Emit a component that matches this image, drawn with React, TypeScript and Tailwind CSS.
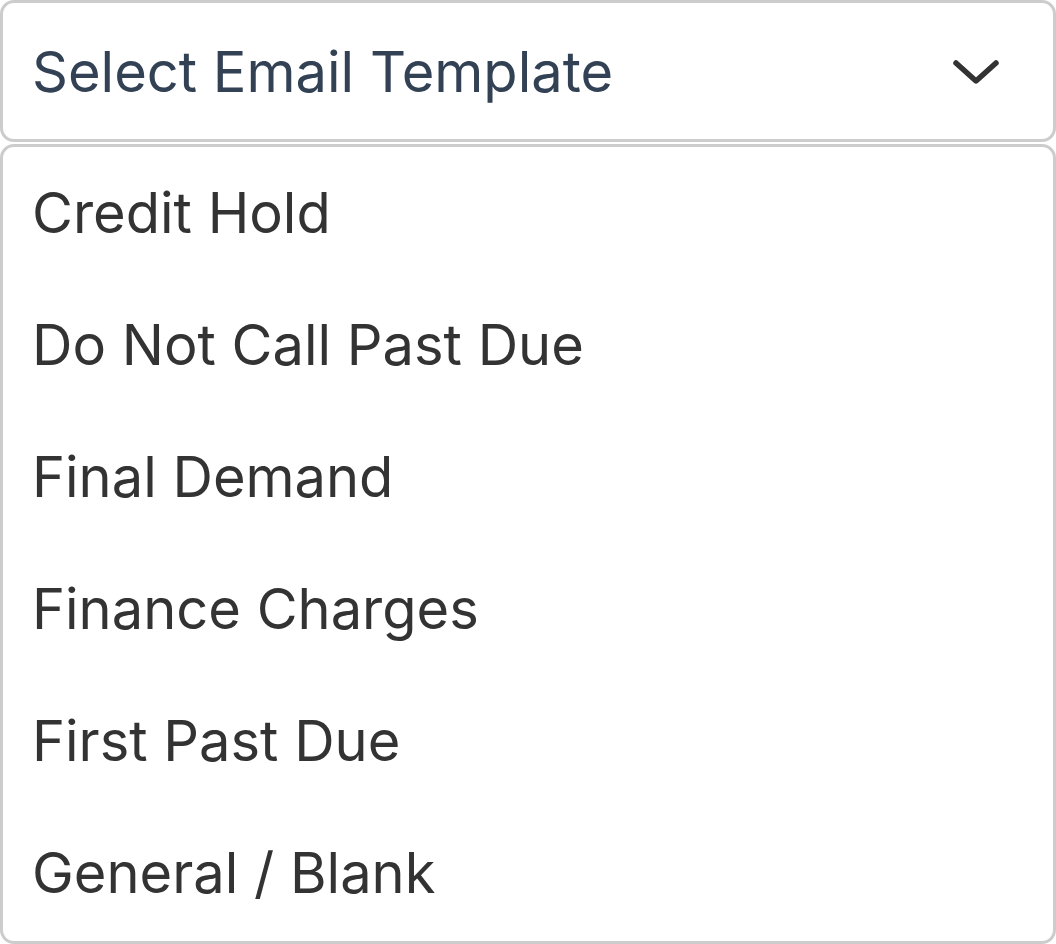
import React from "react";

const items = [
  "Credit Hold",
  "Do Not Call Past Due",
  "Final Demand",
  "Finance Charges",
  "First Past Due",
  "General / Blank",
];

export default function App() {
  return (
    <div
      className="w-[1056px] h-[944px] bg-white"
      style={{ fontFamily: "Inter, 'Noto Sans', sans-serif" }}
    >
      <div className="h-[142px] border-[3px] border-[#cccccc] rounded-[14px] flex items-center justify-between pl-[29px] pr-[55px]">
        <span className="text-[56px] leading-none text-[#334155] translate-y-[1px]">Select Email Template</span>
        <svg width="50" height="30" viewBox="0 0 50 30" className="shrink-0 -mr-[3px] translate-y-[1px]">
          <polyline
            points="5,6 25,24 45,6"
            fill="none"
            stroke="#333333"
            strokeWidth="5.5"
            strokeLinecap="round"
            strokeLinejoin="round"
          />
        </svg>
      </div>
      <div className="mt-[2px] h-[800px] border-[3px] border-[#cccccc] rounded-[14px] flex flex-col">
        {items.map((t) => (
          <div key={t} className="h-[132px] flex items-center pl-[29px]">
            <span className="text-[56px] leading-none text-[#333333]">{t}</span>
          </div>
        ))}
      </div>
    </div>
  );
}
